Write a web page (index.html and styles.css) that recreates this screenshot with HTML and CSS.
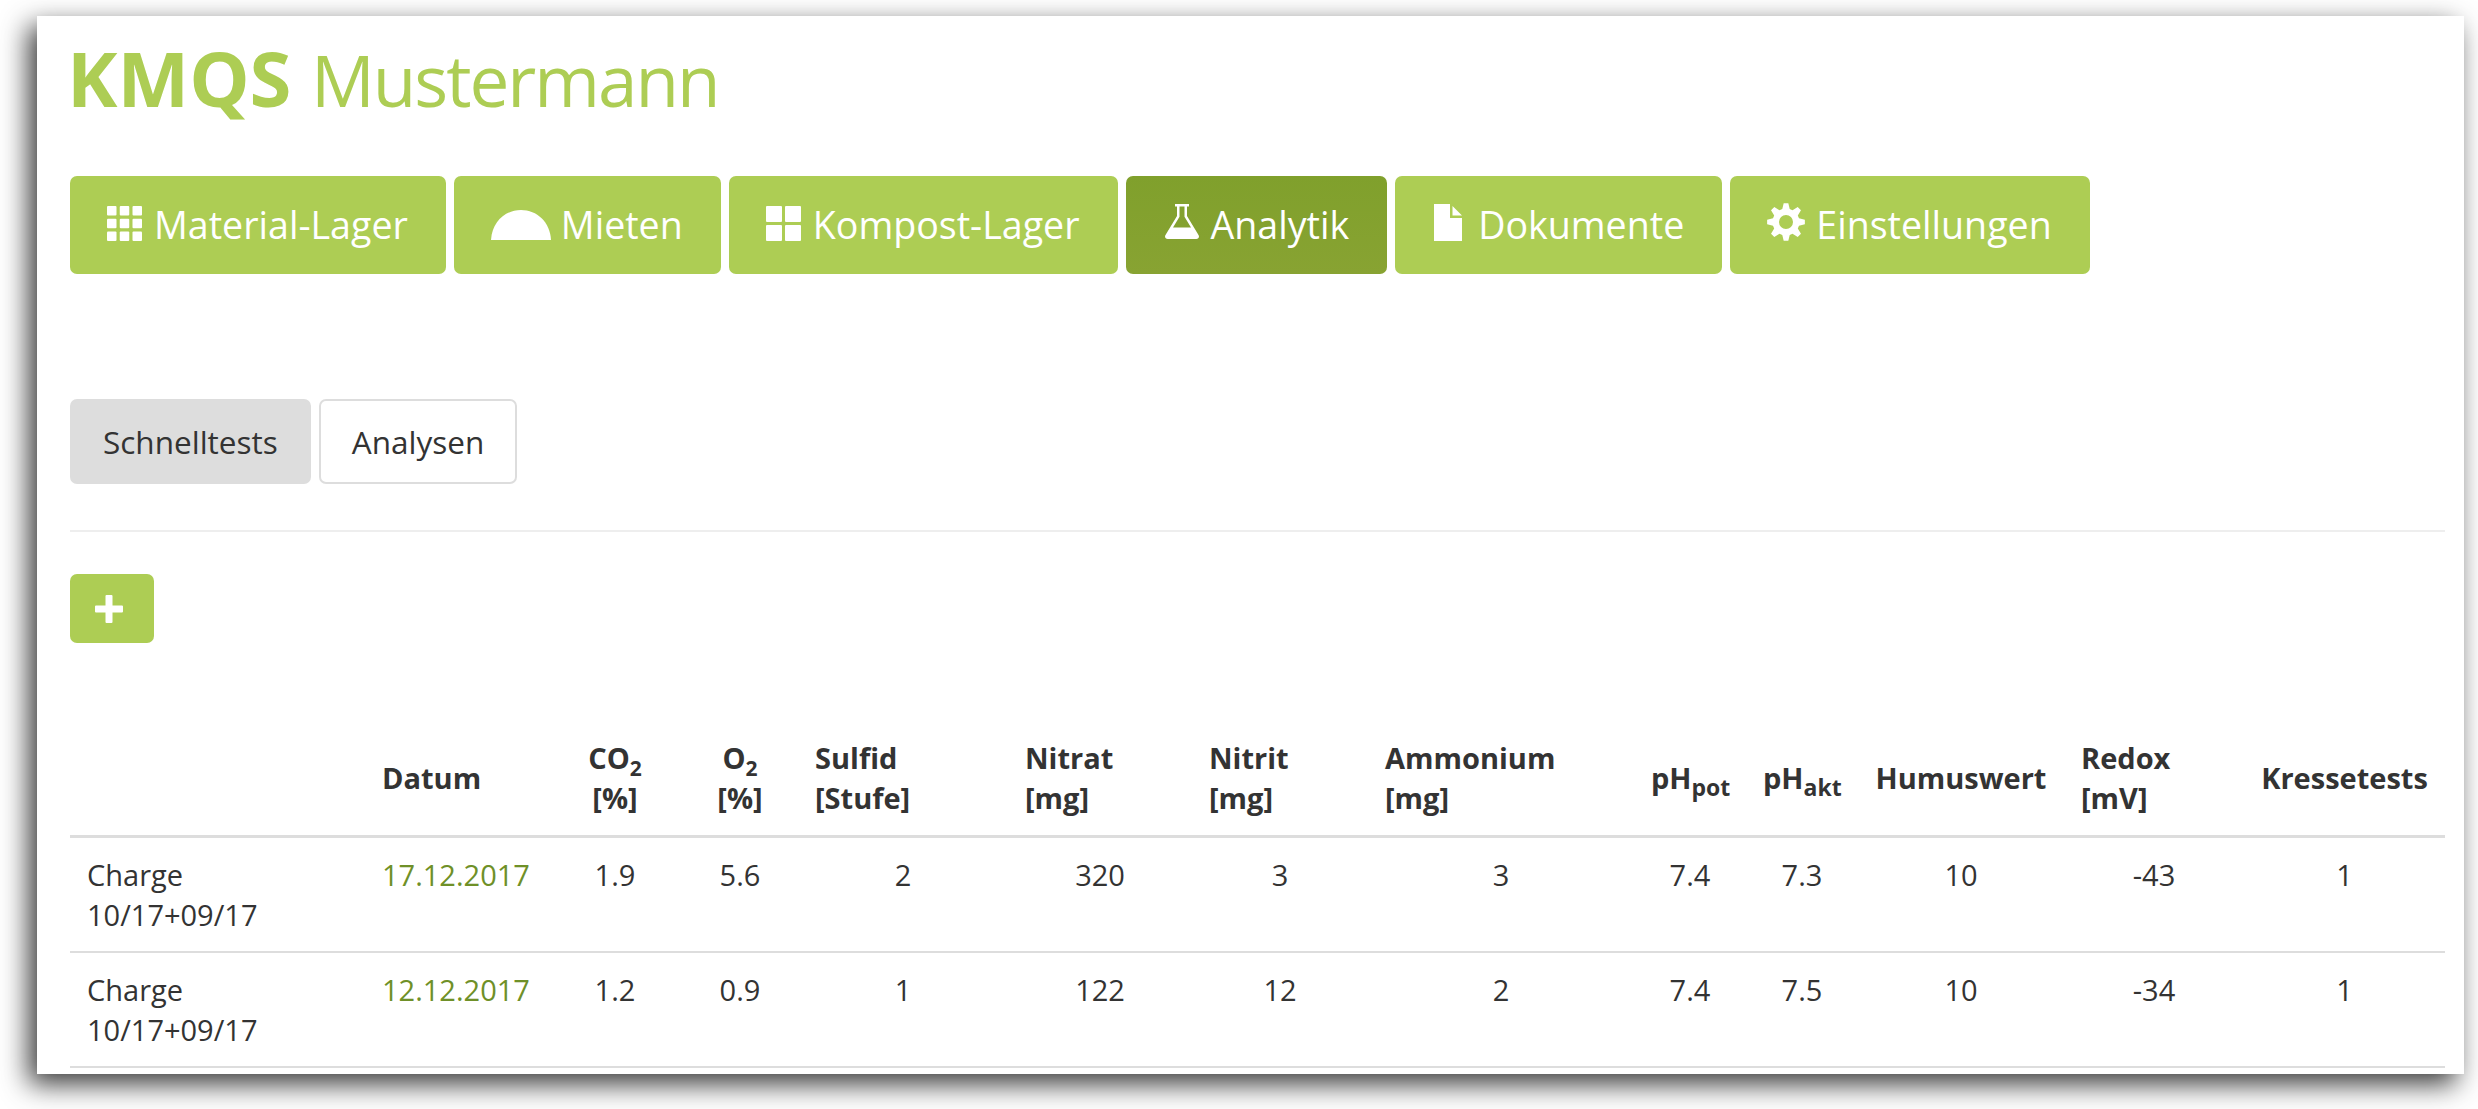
FILE: index.html
```html
<!DOCTYPE html>
<html>
<head>
  <meta charset="utf-8">
  <title>KMQS Mustermann</title>
  <link rel="stylesheet" href="styles.css">
</head>
<body>
  <div class="window">
    <h1 class="brand"><b>KMQS</b> Mustermann</h1>
    <nav class="main-nav">
      <a class="nav-btn" href="#">
        <svg class="icon icon-th" viewBox="0 0 35 35">
          <rect width="9.500" height="9.500" rx="1"/><rect x="12.750" width="9.500" height="9.500" rx="1"/><rect x="25.500" width="9.500" height="9.500" rx="1"/>
          <rect y="12.750" width="9.500" height="9.500" rx="1"/><rect x="12.750" y="12.750" width="9.500" height="9.500" rx="1"/><rect x="25.500" y="12.750" width="9.500" height="9.500" rx="1"/>
          <rect y="25.500" width="9.500" height="9.500" rx="1"/><rect x="12.750" y="25.500" width="9.500" height="9.500" rx="1"/><rect x="25.500" y="25.500" width="9.500" height="9.500" rx="1"/>
        </svg>
        Material-Lager
      </a>
      <a class="nav-btn" href="#">
        <svg class="icon icon-dome" viewBox="0 0 60 30"><path d="M0 30C1 12 14 0 30 0s29 12 30 30z"/></svg>
        Mieten
      </a>
      <a class="nav-btn" href="#">
        <svg class="icon icon-th" viewBox="0 0 35 35">
          <rect width="16" height="16" rx="1"/><rect x="19" width="16" height="16" rx="1"/>
          <rect y="19" width="16" height="16" rx="1"/><rect x="19" y="19" width="16" height="16" rx="1"/>
        </svg>
        Kompost-Lager
      </a>
      <a class="nav-btn active" href="#">
        <svg class="icon icon-flask" viewBox="0 0 34 35"><path fill-rule="evenodd" d="M10 0H24V2.500H22V12L33.500 31c1.200 2 0 4-2.200 4H2.700C.5 35-.7 33 .5 31L12 12V2.500H10ZM14.500 2.500V12.700L8 23.500H26L19.500 12.700V2.500Z"/></svg>
        Analytik
      </a>
      <a class="nav-btn" href="#">
        <svg class="icon icon-file" viewBox="0 0 28 37"><path d="M0 0H16V14H28V37H0ZM18.500 2 28 11.500H18.500Z"/></svg>
        Dokumente
      </a>
      <a class="nav-btn" href="#">
        <svg class="icon icon-cog" viewBox="0 0 38 38"><path fill-rule="evenodd" d="M15.280 6.020 16.680.14H21.320L22.720 6.020 25.540 7.190 30.700 4.030 33.970 7.300 30.810 12.460 31.980 15.280 37.860 16.680V21.320L31.980 22.720 30.810 25.540 33.970 30.700 30.700 33.970 25.540 30.810 22.720 31.980 21.320 37.860H16.680L15.280 31.980 12.460 30.810 7.300 33.970 4.030 30.700 7.190 25.540 6.020 22.720.14 21.320V16.680L6.020 15.280 7.190 12.460 4.030 7.300 7.300 4.030 12.460 7.190ZM19 12a7 7 0 1 0 0 14 7 7 0 0 0 0-14Z"/></svg>
        Einstellungen
      </a>
    </nav>

    <div class="tabs">
      <a class="tab active" href="#">Schnelltests</a>
      <a class="tab" href="#">Analysen</a>
    </div>
    <hr class="divider">
    <a class="add-btn" href="#">
      <svg viewBox="0 0 28 28"><path d="M10.500 1a1 1 0 0 1 1-1h5a1 1 0 0 1 1 1v9.500H27a1 1 0 0 1 1 1v5a1 1 0 0 1-1 1h-9.500V27a1 1 0 0 1-1 1h-5a1 1 0 0 1-1-1v-9.500H1a1 1 0 0 1-1-1v-5a1 1 0 0 1 1-1h9.500z"/></svg>
    </a>

    <table class="tests">
      <colgroup>
        <col class="c-name"><col class="c-date"><col class="c-co2"><col class="c-o2"><col class="c-sulfid">
        <col class="c-nitrat"><col class="c-nitrit"><col class="c-amm"><col class="c-ph"><col class="c-ph">
        <col class="c-humus"><col class="c-redox"><col class="c-kresse">
      </colgroup>
      <thead>
        <tr>
          <th></th>
          <th>Datum</th>
          <th class="mid">CO<sub>2</sub><br>[%]</th>
          <th class="mid">O<sub>2</sub><br>[%]</th>
          <th>Sulfid<br>[Stufe]</th>
          <th>Nitrat<br>[mg]</th>
          <th>Nitrit<br>[mg]</th>
          <th>Ammonium<br>[mg]</th>
          <th class="mid">pH<sub class="small">pot</sub></th>
          <th class="mid">pH<sub class="small">akt</sub></th>
          <th class="mid">Humuswert</th>
          <th>Redox<br>[mV]</th>
          <th class="mid">Kressetests</th>
        </tr>
      </thead>
      <tbody>
        <tr>
          <td class="left">Charge<br>10/17+09/17</td>
          <td class="left"><a href="#">17.12.2017</a></td>
          <td>1.9</td><td>5.6</td><td>2</td><td>320</td><td>3</td><td>3</td>
          <td>7.4</td><td>7.3</td><td>10</td><td>-43</td><td>1</td>
        </tr>
        <tr>
          <td class="left">Charge<br>10/17+09/17</td>
          <td class="left"><a href="#">12.12.2017</a></td>
          <td>1.2</td><td>0.9</td><td>1</td><td>122</td><td>12</td><td>2</td>
          <td>7.4</td><td>7.5</td><td>10</td><td>-34</td><td>1</td>
        </tr>
      </tbody>
    </table>
  </div>
</body>
</html>
```

FILE: styles.css
```css
:root {
  --green: #adcd54;
  --text: #333;
}
* {
  box-sizing: border-box;
}
html, body {
  height: 100%;
}
body {
  margin: 0;
  padding: 16px 14px 35px 37px;
  overflow: hidden;
  background: #fff;
  font-family: "Open Sans", sans-serif;
  font-size: 29px;
  line-height: 40px;
  color: var(--text);
}
a {
  text-decoration: none;
}
.window {
  height: 1058px;
  padding: 0 19px 0 33px;
  overflow: hidden;
  background: #fff;
  box-shadow: -8px 10px 26px rgba(0, 0, 0, 0.78);
}
.brand {
  margin: 20px 0 0 -3px;
  font-size: 71px;
  line-height: 84px;
  font-weight: 400;
  letter-spacing: -2px;
  word-spacing: 3px;
  color: var(--green);
}
.brand b {
  font-size: 76px;
  font-weight: 700;
  letter-spacing: 0;
}
.main-nav {
  display: flex;
  gap: 8px;
  margin-top: 54px;
}
.nav-btn {
  display: flex;
  align-items: center;
  height: 98px;
  padding: 0 38px 0 37px;
  border-radius: 7px;
  background: var(--green);
  color: #fff;
  font-size: 37.600px;
}
.nav-btn.active {
  background: linear-gradient(#80a02c, #88a332);
}
.icon {
  flex: none;
  fill: #fff;
  margin-bottom: 3px;
}
.icon-th {
  width: 35px;
  height: 35px;
  margin-right: 12px;
}
.icon-dome {
  width: 60px;
  height: 30px;
  margin: 0 10px 0 0;
}
.icon-flask {
  width: 34px;
  height: 35px;
  margin-right: 12px;
  margin-left: 2px;
  margin-bottom: 7px;
}
.icon-file {
  width: 28px;
  height: 37px;
  margin-right: 16px;
  margin-left: 2px;
  margin-bottom: 6px;
}
.icon-cog {
  width: 38px;
  height: 38px;
  margin-right: 11px;
  margin-bottom: 6px;
}
.tabs {
  display: flex;
  gap: 8px;
  margin-top: 125px;
}
.tab {
  display: flex;
  align-items: center;
  height: 85px;
  padding: 0 31px;
  border: 2px solid #ddd;
  border-radius: 7px;
  color: var(--text);
  font-size: 31.500px;
}
.tab.active {
  background: #ddd;
}
.divider {
  margin: 46px 0 42px;
  border: 0;
  border-top: 2px solid #eee;
}
.add-btn {
  display: block;
  width: 84px;
  height: 69px;
  padding: 21px 0 0 25px;
  border-radius: 7px;
  background: var(--green);
}
.add-btn svg {
  display: block;
  width: 28px;
  height: 28px;
  fill: #fff;
}
.tests {
  width: 2375px;
  margin-top: 95px;
  border-collapse: collapse;
  table-layout: fixed;
}
.c-name { width: 295px; }
.c-date { width: 183px; }
.c-co2 { width: 134px; }
.c-o2 { width: 116px; }
.c-sulfid { width: 210px; }
.c-nitrat { width: 184px; }
.c-nitrit { width: 176px; }
.c-amm { width: 266px; }
.c-ph { width: 112px; }
.c-humus { width: 206px; }
.c-redox { width: 180px; }
.c-kresse { width: 201px; }
.tests th {
  padding: 0 17px 17px;
  border-bottom: 3px solid #ddd;
  text-align: left;
  vertical-align: middle;
  font-weight: 700;
  white-space: nowrap;
}
.tests th.mid {
  text-align: center;
}
.tests sub {
  font-size: 21px;
  line-height: 0;
}
.tests sub.small {
  font-size: 23px;
}
.tests td {
  padding: 17px 17px 16px;
  border-bottom: 2px solid #ddd;
  text-align: center;
  vertical-align: top;
}
.tests td.left {
  text-align: left;
}
.tests td a {
  color: #6f9028;
}
```
